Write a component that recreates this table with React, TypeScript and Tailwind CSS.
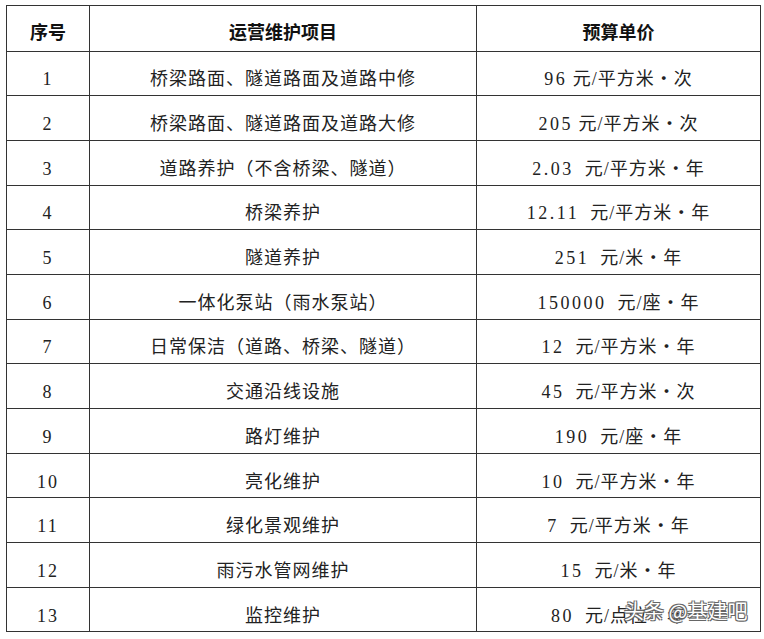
import * as React from 'react';

const rows: [string, string, string][] = [
  ['桥梁路面、隧道路面及道路中修', '96', ' 元/平方米・次'],
  ['桥梁路面、隧道路面及道路大修', '205', ' 元/平方米・次'],
  ['道路养护（不含桥梁、隧道）', '2.03', '  元/平方米・年'],
  ['桥梁养护', '12.11', '  元/平方米・年'],
  ['隧道养护', '251', '  元/米・年'],
  ['一体化泵站（雨水泵站）', '150000', '  元/座・年'],
  ['日常保洁（道路、桥梁、隧道）', '12', '  元/平方米・年'],
  ['交通沿线设施', '45', '  元/平方米・次'],
  ['路灯维护', '190', '  元/座・年'],
  ['亮化维护', '10', '  元/平方米・年'],
  ['绿化景观维护', '7', '  元/平方米・年'],
  ['雨污水管网维护', '15', '  元/米・年'],
  ['监控维护', '80', '  元/点位・年'],
];

const body = "font-['Liberation_Serif','Noto_Sans_CJK_SC',serif]";

export default function App() {
  return (
    <div className="relative w-[764px] h-[639px] bg-white pl-[6px] pt-[5px]">
      <table className="border-collapse table-fixed text-[#222]">
        <colgroup>
          <col className="w-[83px]" />
          <col className="w-[387px]" />
          <col className="w-[284px]" />
        </colgroup>
        <thead>
          <tr className="h-[45.5px] font-['Noto_Sans_CJK_SC',sans-serif] font-bold text-[18px] text-[#111]">
            <th className="border border-[#333] pt-[6px]">序号</th>
            <th className="border border-[#333] pt-[6px]">运营维护项目</th>
            <th className="border border-[#333] pt-[6px]">预算单价</th>
          </tr>
        </thead>
        <tbody className={`${body} text-[18px]`}>
          {rows.map(([name, num, unit], i) => (
            <tr key={i} className="h-[44.7px]">
              <td className="border border-[#333] text-center pt-[12px] leading-none tracking-[2px]">{i + 1}</td>
              <td className="border border-[#333] text-center pt-[12px] leading-none tracking-[1px]">{name}</td>
              <td className="border border-[#333] text-center pt-[12px] leading-none whitespace-pre">
                <span className="tracking-[2.5px]">{num}</span>
                <span className="tracking-[1px]">{unit}</span>
              </td>
            </tr>
          ))}
        </tbody>
      </table>
      <div className="absolute left-[624px] top-[596px] font-['Noto_Sans_CJK_SC',sans-serif] text-[20px] text-white [text-shadow:1px_1px_0_#666,-1px_-1px_0_#666,1px_-1px_0_#666,-1px_1px_0_#666]">
        头条 @基建吧
      </div>
    </div>
  );
}
